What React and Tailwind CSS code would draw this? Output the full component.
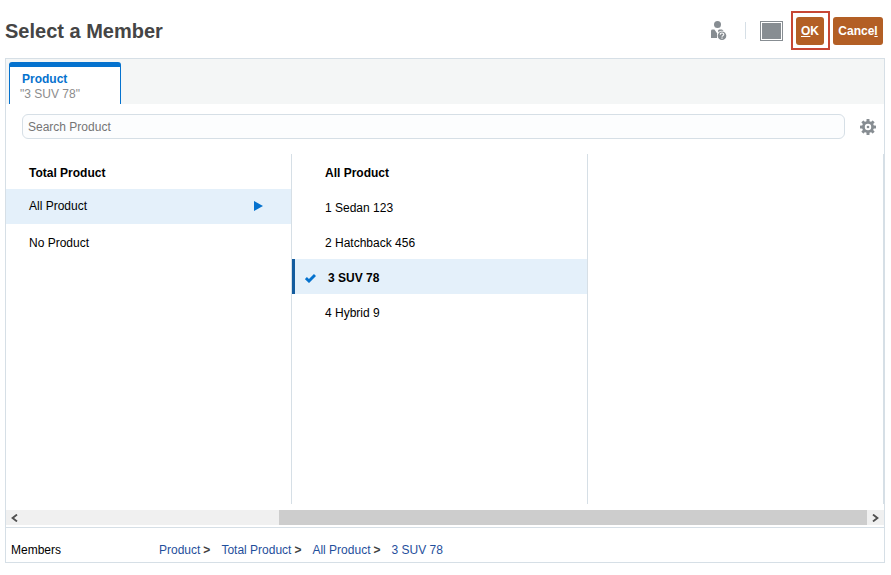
import React, { useState } from 'react';
import clsx from 'clsx';

const ROOT_MEMBERS = ['All Product', 'No Product'];
const PRODUCTS = ['1 Sedan 123', '2 Hatchback 456', '3 SUV 78', '4 Hybrid 9'];

function PersonHelpIcon() {
  return (
    <svg width="18" height="20" viewBox="0 0 18 20" aria-hidden="true">
      <circle cx="7.5" cy="3.5" r="3.5" fill="#878d92" />
      <path d="M1 10Q1 8.6 2.5 8.6H4.4L7.2 12.5 7 17H1zM8 9.5l1-.9h3l1.5 1.2-5 2z" fill="#878d92" />
      <circle cx="12" cy="14.8" r="5" fill="#fff" />
      <circle cx="12" cy="14.8" r="4.3" fill="#878d92" />
      <path d="M10.2 13.7c0-2.3 3.6-2.2 3.6-.2 0 1.2-1.8 1.2-1.8 2.3M12 16.6v1.2" fill="none" stroke="#fff" strokeWidth="1.1" />
    </svg>
  );
}

function GearIcon() {
  return (
    <svg width="16" height="16" viewBox="0 0 16 16" aria-hidden="true">
      <g fill="#878d92">
        {[0, 45, 90, 135].map(a => (
          <rect key={a} x="6.5" y="0" width="3" height="16" rx="0.5" transform={`rotate(${a} 8 8)`} />
        ))}
        <circle cx="8" cy="8" r="6" />
      </g>
      <circle cx="8" cy="8" r="3.2" fill="#fff" />
      <circle cx="8" cy="8" r="1.3" fill="#878d92" />
    </svg>
  );
}

function Chevron({ left }) {
  return (
    <svg width="7" height="8" viewBox="0 0 7 8" aria-hidden="true">
      <path d={left ? 'M6 .6 1.6 4 6 7.4' : 'M1 .6 5.4 4 1 7.4'} fill="none" stroke="#505050" strokeWidth="1.9" />
    </svg>
  );
}

function Header() {
  return (
    <header className="flex h-[58px] items-center justify-between pl-[5px] pr-2 pt-[3px]">
      <h1 className="text-xl font-bold text-[#454545]">Select a Member</h1>
      <div className="flex items-center">
        <button type="button" aria-label="Help">
          <PersonHelpIcon />
        </button>
        <div className="ml-[17px] mr-[14px] h-[17px] w-px bg-[#d6dfe6]" />
        <button
          type="button"
          aria-label="View"
          className="mr-2 h-5 w-[23px] border border-[#878d92] p-px"
        >
          <span className="block h-full bg-[#878d92]" />
        </button>
        {/* Highlight frame round the primary action */}
        <div className="mr-[3px] border-2 border-[#c74634] pb-[3px] pl-[3px] pr-1 pt-1">
          <button type="button" className="block h-7 w-7 rounded-[3px] bg-[#b35f25] text-xs font-bold text-white">
            <span className="underline">O</span>K
          </button>
        </div>
        <button type="button" className="h-7 w-[50px] rounded-[3px] bg-[#b35f25] text-xs font-bold text-white">
          Cance<span className="underline">l</span>
        </button>
      </div>
    </header>
  );
}

function Breadcrumbs({ trail }) {
  return (
    <nav aria-label="Members" className="flex gap-[11px]">
      {trail.map((name, i) => (
        <span key={name}>
          <a href="#" className="text-[#1f4f9c]">{name}</a>
          {i < trail.length - 1 && <span className="ml-[3px] font-bold text-[#404040]">&gt;</span>}
        </span>
      ))}
    </nav>
  );
}

export default function App() {
  const [query, setQuery] = useState('');
  const [selected, setSelected] = useState('3 SUV 78');

  return (
    <div className="flex min-h-screen flex-col bg-white pb-3 font-['Liberation_Sans',Arial,sans-serif] text-xs text-black">
      <Header />

      <main className="ml-[5px] mr-[6px] flex flex-1 flex-col border border-[#d6dfe6]">
        {/* Tabs */}
        <div role="tablist" className="flex bg-[#f4f6f6] pl-[3px] pt-[3px]">
          <button
            type="button"
            role="tab"
            aria-selected="true"
            className="h-[42px] w-28 rounded-t-[3px] border-x border-t-5 border-[#0572ce] bg-white pl-[10px] pt-[3px] text-left leading-[15px]"
          >
            <span className="block pl-[2px] font-bold text-[#0572ce]">Product</span>
            <span className="block text-[#8c8c8c]">"{selected}"</span>
          </button>
        </div>

        {/* Search */}
        <div className="flex items-center pb-[15px] pl-4 pr-2 pt-[10px]">
          <input
            type="text"
            aria-label="Search Product"
            placeholder="Search Product"
            value={query}
            onChange={e => setQuery(e.target.value)}
            className="h-[25px] min-w-0 flex-1 rounded-[6px] border border-[#d6dfe6] bg-[#fcfdfe] px-[5px] placeholder:text-[#757575]"
          />
          <button type="button" aria-label="Settings" className="ml-[15px]">
            <GearIcon />
          </button>
        </div>

        {/* Member columns */}
        <div className="flex flex-1 overflow-hidden">
          <section className="w-[286px] shrink-0 border-r border-[#d6dfe6]">
            <h2 className="flex h-[35px] items-center pl-[23px] pt-[2px] font-bold">Total Product</h2>
            <ul>
              {ROOT_MEMBERS.map(name => {
                const open = name === 'All Product';
                return (
                  <li key={name}>
                    <button
                      type="button"
                      className={clsx(
                        'flex h-[35px] w-full items-center justify-between pl-[23px] pr-7',
                        open ? 'bg-[#e4f0fa] pb-px' : 'pt-[2px]'
                      )}
                    >
                      {name}
                      {open && (
                        <svg width="9" height="10" viewBox="0 0 9 10" aria-hidden="true">
                          <path d="M0 0l9 5-9 5z" fill="#0572ce" />
                        </svg>
                      )}
                    </button>
                  </li>
                );
              })}
            </ul>
          </section>

          <section className="w-[296px] shrink-0 border-r border-[#d6dfe6]">
            <h2 className="flex h-[35px] items-center pl-[33px] pt-[2px] font-bold">All Product</h2>
            <ul>
              {PRODUCTS.map(name => {
                const active = name === selected;
                return (
                  <li key={name}>
                    <button
                      type="button"
                      onClick={() => setSelected(name)}
                      className={clsx(
                        'flex h-[35px] w-full items-center pt-[2px]',
                        active ? 'border-l-3 border-[#145c9e] bg-[#e4f0fa] pl-[10px] font-bold' : 'pl-[33px]'
                      )}
                    >
                      {active && (
                        <svg className="mr-3" width="11" height="10" viewBox="0 0 11 10" aria-hidden="true">
                          <path d="M.9 5l3.1 3L10 2" fill="none" stroke="#0572ce" strokeWidth="2.9" />
                        </svg>
                      )}
                      {name}
                    </button>
                  </li>
                );
              })}
            </ul>
          </section>

          <section className="flex-1 border-r border-[#d6dfe6]" />
        </div>

        {/* Horizontal scroller */}
        <div className="mt-[6px] flex h-[15px] bg-[#f0f0f0]">
          <button type="button" aria-label="Scroll left" className="flex w-4 items-center justify-center">
            <Chevron left />
          </button>
          <div className="flex flex-1 justify-end">
            <div className="w-[69.6%] bg-[#cdcdcd]" />
          </div>
          <button type="button" aria-label="Scroll right" className="flex w-[17px] items-center justify-center">
            <Chevron />
          </button>
        </div>

        <footer className="mt-[2px] flex h-[35px] items-center border-t border-[#d6dfe6] pl-[5px] pt-[10px]">
          <span className="w-[148px]">Members</span>
          <Breadcrumbs trail={['Product', 'Total Product', 'All Product', selected]} />
        </footer>
      </main>
    </div>
  );
}
